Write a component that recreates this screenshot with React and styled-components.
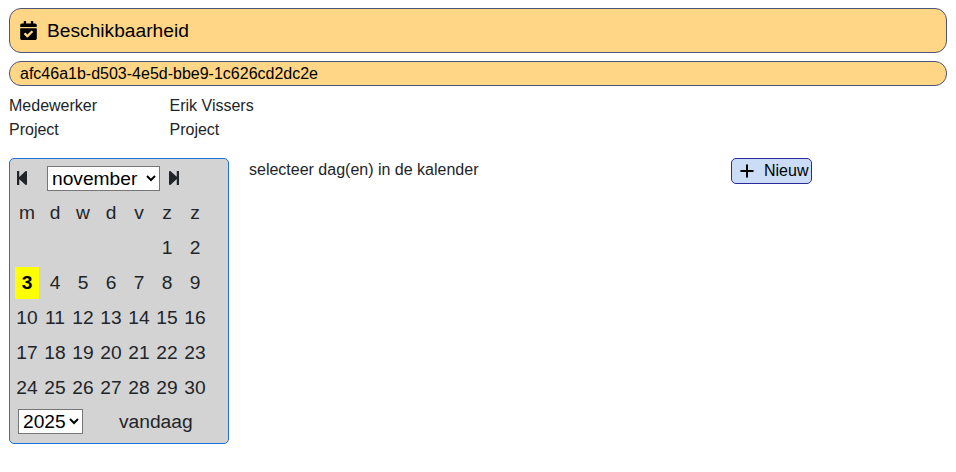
import styled, { createGlobalStyle } from "styled-components";
import { FaCalendarCheck, FaStepBackward, FaStepForward } from "react-icons/fa";
import { Plus } from "lucide-react";

const GlobalStyle = createGlobalStyle`
  body {
    margin: 0;
    background: #fff;
    font-family: "Liberation Sans", Arial, sans-serif;
    color: #212529;
  }
`
const Page = styled.div`
  padding: 8px 9px 0;
`
const TitleBar = styled.div`
  box-sizing: border-box;
  height: 45px;
  display: flex;
  align-items: center;
  gap: 9px;
  padding-left: 9px;
  background: #ffd685;
  border: 1px solid #4a5578;
  border-radius: 12px;
  color: #000;
  font-size: 19.2px;
`
const IdBar = styled.div`
  box-sizing: border-box;
  height: 25px;
  margin-top: 8px;
  padding-left: 10px;
  line-height: 23px;
  background: #ffd685;
  border: 1px solid #4a5578;
  border-radius: 12px;
  color: #000;
  font-size: 16px;
`
const InfoList = styled.div`
  margin-top: 8px;
`
const InfoRow = styled.div`
  display: grid;
  grid-template-columns: 160.5px 1fr;
  height: 24px;
  line-height: 24px;
  font-size: 16px;
`
const Content = styled.div`
  display: flex;
  align-items: flex-start;
  margin-top: 16px;
`
const Calendar = styled.div`
  box-sizing: border-box;
  width: 220px;
  height: 286px;
  padding: 6px 3px 0;
  background: #d3d3d3;
  border: 1px solid #1a73d9;
  border-radius: 5px;
`
const MonthBar = styled.div`
  display: flex;
  align-items: center;
  height: 26px;
`
const StepButton = styled.span`
  display: flex;
  font-size: 16px;
  color: #212529;
  margin: ${props => props.margin};
`
const Select = styled.select`
  height: ${props => props.height}px;
  font-family: inherit;
  font-size: 19.2px;
  background: #fff;
  color: #000;
`
const DayGrid = styled.div`
  display: grid;
  grid-template-columns: repeat(7, 28px);
  grid-auto-rows: 35px;
  margin-top: 4px;
`
const DayCell = styled.div`
  display: flex;
  align-items: center;
  justify-content: center;
  font-size: 19.2px;
`
const Today = styled.span`
  width: 24px;
  height: 32px;
  line-height: 32px;
  text-align: center;
  background: #ff0;
  color: #000;
  font-weight: 700;
`
const CalendarFooter = styled.div`
  display: flex;
  align-items: center;
  margin-top: 4px;
  padding-left: 5px;
  font-size: 19.2px;
`
const TodayLink = styled.span`
  margin-left: 36px;
`
const SelectionText = styled.div`
  width: 482px;
  margin-left: 20px;
  font-size: 16px;
  line-height: 24px;
  color: #212529;
`
const NewButton = styled.button`
  box-sizing: border-box;
  width: 81px;
  height: 26px;
  padding: 0 0 0 5px;
  display: flex;
  align-items: center;
  gap: 7px;
  background: #cbdcf6;
  border: 1px solid #2a2a9a;
  border-radius: 5px;
  color: #000;
  font-family: inherit;
  font-size: 16px;
`

const months = ["januari", "februari", "maart", "april", "mei", "juni", "juli", "augustus", "september", "oktober", "november", "december"];
const weekDays = ["m", "d", "w", "d", "v", "z", "z"];
const blanks = [0, 1, 2, 3, 4];
const days = Array.from({ length: 30 }, (_, i) => i + 1);

export default function App() {
  return (
    <Page>
      <GlobalStyle />
      <TitleBar>
        <FaCalendarCheck size={19} />
        Beschikbaarheid
      </TitleBar>
      <IdBar>afc46a1b-d503-4e5d-bbe9-1c626cd2dc2e</IdBar>
      <InfoList>
        <InfoRow><span>Medewerker</span><span>Erik Vissers</span></InfoRow>
        <InfoRow><span>Project</span><span>Project</span></InfoRow>
      </InfoList>
      <Content>
        <Calendar>
          <MonthBar>
            <StepButton margin="0 17px 0 1px"><FaStepBackward /></StepButton>
            <Select height={25} defaultValue="november">
              {months.map((month) => <option key={month}>{month}</option>)}
            </Select>
            <StepButton margin="0 0 0 6px"><FaStepForward /></StepButton>
          </MonthBar>
          <DayGrid>
            {weekDays.map((day, i) => <DayCell key={i}>{day}</DayCell>)}
            {blanks.map((i) => <DayCell key={i} />)}
            {days.map((day) => (
              <DayCell key={day}>{day === 3 ? <Today>3</Today> : day}</DayCell>
            ))}
          </DayGrid>
          <CalendarFooter>
            <Select height={25} defaultValue="2025">
              <option>2024</option>
              <option>2025</option>
              <option>2026</option>
            </Select>
            <TodayLink>vandaag</TodayLink>
          </CalendarFooter>
        </Calendar>
        <SelectionText>selecteer dag(en) in de kalender</SelectionText>
        <NewButton><Plus size={20} strokeWidth={2.4} />Nieuw</NewButton>
      </Content>
    </Page>
  );
}
